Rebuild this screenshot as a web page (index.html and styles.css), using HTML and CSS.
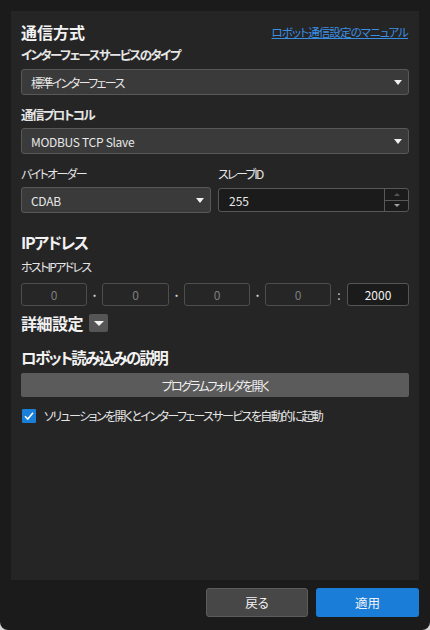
FILE: index.html
```html
<!DOCTYPE html>
<html lang="ja">
<head>
<meta charset="utf-8">
<link rel="stylesheet" href="styles.css">
</head>
<body>
<div class="window">
  <div class="panel">
    <div class="title-row">
      <span class="h1">通信方式</span>
      <a class="link">ロボット通信設定のマニュアル</a>
    </div>
    <div class="label bold mt3">インターフェースサービスのタイプ</div>
    <div class="select mt5"><span class="jp">標準インターフェース</span><i class="caret"></i></div>
    <div class="label bold mt11">通信プロトコル</div>
    <div class="select mt4"><span class="latin">MODBUS TCP Slave</span><i class="caret"></i></div>
    <div class="two-col mt11">
      <div class="col">
        <div class="label">バイトオーダー</div>
        <div class="select mt4"><span class="latin">CDAB</span><i class="caret"></i></div>
      </div>
      <div class="col">
        <div class="label">スレーブID</div>
        <div class="spin mt5">
          <span class="spin-val">255</span>
          <div class="spin-btns">
            <div class="spin-up"><i class="tri-up"></i></div>
            <div class="spin-down"><i class="tri-down"></i></div>
          </div>
        </div>
      </div>
    </div>
    <div class="h1 kata mt18">IPアドレス</div>
    <div class="label mt5">ホストIPアドレス</div>
    <div class="ip-row mt7">
      <div class="ip">0</div><span class="sep">·</span>
      <div class="ip">0</div><span class="sep">·</span>
      <div class="ip">0</div><span class="sep">·</span>
      <div class="ip">0</div><span class="sep colon">:</span>
      <div class="ip port">2000</div>
    </div>
    <div class="adv-row mt6">
      <span class="h1 tight">詳細設定</span>
      <span class="toggle"><i class="tri-down big"></i></span>
    </div>
    <div class="h1 kata2 mt12">ロボット読み込みの説明</div>
    <div class="btn-wide mt5">プログラムフォルダを開く</div>
    <div class="check-row mt9">
      <span class="checkbox"><svg width="14" height="14" viewBox="0 0 14 14"><path d="M3 7.2 L5.8 10 L11 3.8" fill="none" stroke="#fff" stroke-width="1.6"/></svg></span>
      <span class="label">ソリューションを開くとインターフェースサービスを自動的に起動</span>
    </div>
  </div>
  <div class="footer">
    <div class="btn back">戻る</div>
    <div class="btn apply">適用</div>
  </div>
</div>
</body>
</html>
```

FILE: styles.css
```css
* { box-sizing: border-box; }
html, body { margin: 0; padding: 0; background: #d8d8d8; }
body {
  font-family: "Noto Sans CJK JP", "Noto Sans", sans-serif;
  font-feature-settings: "palt";
  color: #e8e8e8;
}
.window {
  width: 430px;
  height: 630px;
  background: #1b1b1b;
  border-radius: 0 0 8px 8px;
  padding: 11px 11px 0 11px;
  display: flex;
  flex-direction: column;
}
.panel {
  background: #252525;
  height: 569px;
  padding: 10px 10px 0 10px;
  display: flex;
  flex-direction: column;
}
.title-row {
  display: flex;
  justify-content: space-between;
  align-items: center;
  height: 22px;
}
.h1 {
  font-size: 16px;
  font-weight: 700;
  line-height: 22px;
  height: 22px;
  color: #f2f2f2;
}
.h1.kata { letter-spacing: -1.4px; }
.h1.kata2 { font-size: 15.5px; letter-spacing: -1.7px; }
.h1.tight { letter-spacing: -0.5px; }
.link {
  font-size: 11.5px;
  color: #3a8fe3;
  text-decoration: underline;
  line-height: 16px;
  margin-right: 1px;
  letter-spacing: -0.9px;
}
.label {
  font-size: 12px;
  line-height: 18px;
  height: 18px;
  color: #e6e6e6;
  letter-spacing: -1.7px;
}
.bold { font-weight: 700; letter-spacing: -1.6px; font-size: 12.5px; }
.mt3 { margin-top: 3px; }
.mt4 { margin-top: 4px; }
.mt5 { margin-top: 5px; }
.mt6 { margin-top: 6px; }
.mt7 { margin-top: 7px; }
.mt9 { margin-top: 9px; }
.mt11 { margin-top: 11px; }
.mt12 { margin-top: 12px; }
.mt18 { margin-top: 18px; }

.select {
  height: 26px;
  background: #3a3a3a;
  border: 1px solid #585858;
  border-radius: 3px;
  display: flex;
  align-items: center;
  justify-content: space-between;
  padding: 0 6px 0 9px;
  font-size: 12px;
  color: #e8e8e8;
}
.select .jp { letter-spacing: -1.6px; }
.select .latin { letter-spacing: -0.3px; }
.caret {
  width: 0; height: 0;
  border-left: 4.5px solid transparent;
  border-right: 4.5px solid transparent;
  border-top: 5px solid #f0f0f0;
}
.two-col {
  display: grid;
  grid-template-columns: 190px 191px;
  column-gap: 7px;
}
.spin {
  height: 24px;
  background: #1b1b1b;
  border: 1px solid #585858;
  border-radius: 3px;
  display: flex;
  align-items: center;
  justify-content: space-between;
}
.spin-val { padding-left: 10px; font-size: 12px; color: #e8e8e8; }
.spin-btns {
  width: 24px;
  height: 100%;
  border-left: 1px solid #585858;
  display: flex;
  flex-direction: column;
}
.spin-up, .spin-down {
  flex: 1;
  display: flex;
  align-items: center;
  justify-content: center;
}
.spin-up { border-bottom: 1px solid #585858; }
.tri-up {
  width: 0; height: 0;
  border-left: 3px solid transparent;
  border-right: 3px solid transparent;
  border-bottom: 3px solid #555;
}
.tri-down {
  width: 0; height: 0;
  border-left: 3.5px solid transparent;
  border-right: 3.5px solid transparent;
  border-top: 3.5px solid #a0a0a0;
}
.tri-down.big {
  border-left: 5px solid transparent;
  border-right: 5px solid transparent;
  border-top: 5.5px solid #f4f4f4;
}
.ip-row {
  display: grid;
  grid-template-columns: 66px 15px 67px 15px 66px 15px 66px 16px 62px;
  height: 23px;
  align-items: center;
}
.ip {
  height: 23px;
  background: #262626;
  border: 1px solid #4e4e4e;
  border-radius: 3px;
  display: flex;
  align-items: center;
  justify-content: center;
  font-size: 12px;
  color: #7d7d7d;
}
.ip.port { background: #1b1b1b; color: #f0f0f0; border-color: #555; }
.sep {
  text-align: center;
  font-size: 12px;
  font-weight: 700;
  color: #d0d0d0;
}
.sep.colon { font-weight: 400; }
.adv-row {
  display: flex;
  align-items: center;
  gap: 6px;
}
.toggle {
  width: 19px;
  height: 18px;
  background: #555;
  border-radius: 2px;
  display: flex;
  align-items: center;
  justify-content: center;
}
.btn-wide {
  height: 24px;
  background: #5b5b5b;
  border-radius: 2px;
  display: flex;
  align-items: center;
  justify-content: center;
  font-size: 12px;
  color: #f0f0f0;
  letter-spacing: -1.7px;
}
.check-row {
  display: flex;
  align-items: center;
  gap: 8px;
  padding-left: 1px;
  height: 19px;
}
.checkbox {
  width: 14px;
  height: 14px;
  background: #1a7fd8;
  border-radius: 1px;
  display: block;
}
.checkbox svg { display: block; }
.check-row .label { font-size: 12px; letter-spacing: -1.6px; }
.footer {
  display: flex;
  justify-content: flex-end;
  gap: 8px;
  padding-top: 8px;
}
.btn {
  height: 29px;
  border-radius: 3px;
  display: flex;
  align-items: center;
  justify-content: center;
  font-size: 12.5px;
  color: #f2f2f2;
}
.back { width: 102px; background: #474747; border: 1px solid #5c5c5c; }
.apply { width: 103px; background: #1a7ed9; }
```
